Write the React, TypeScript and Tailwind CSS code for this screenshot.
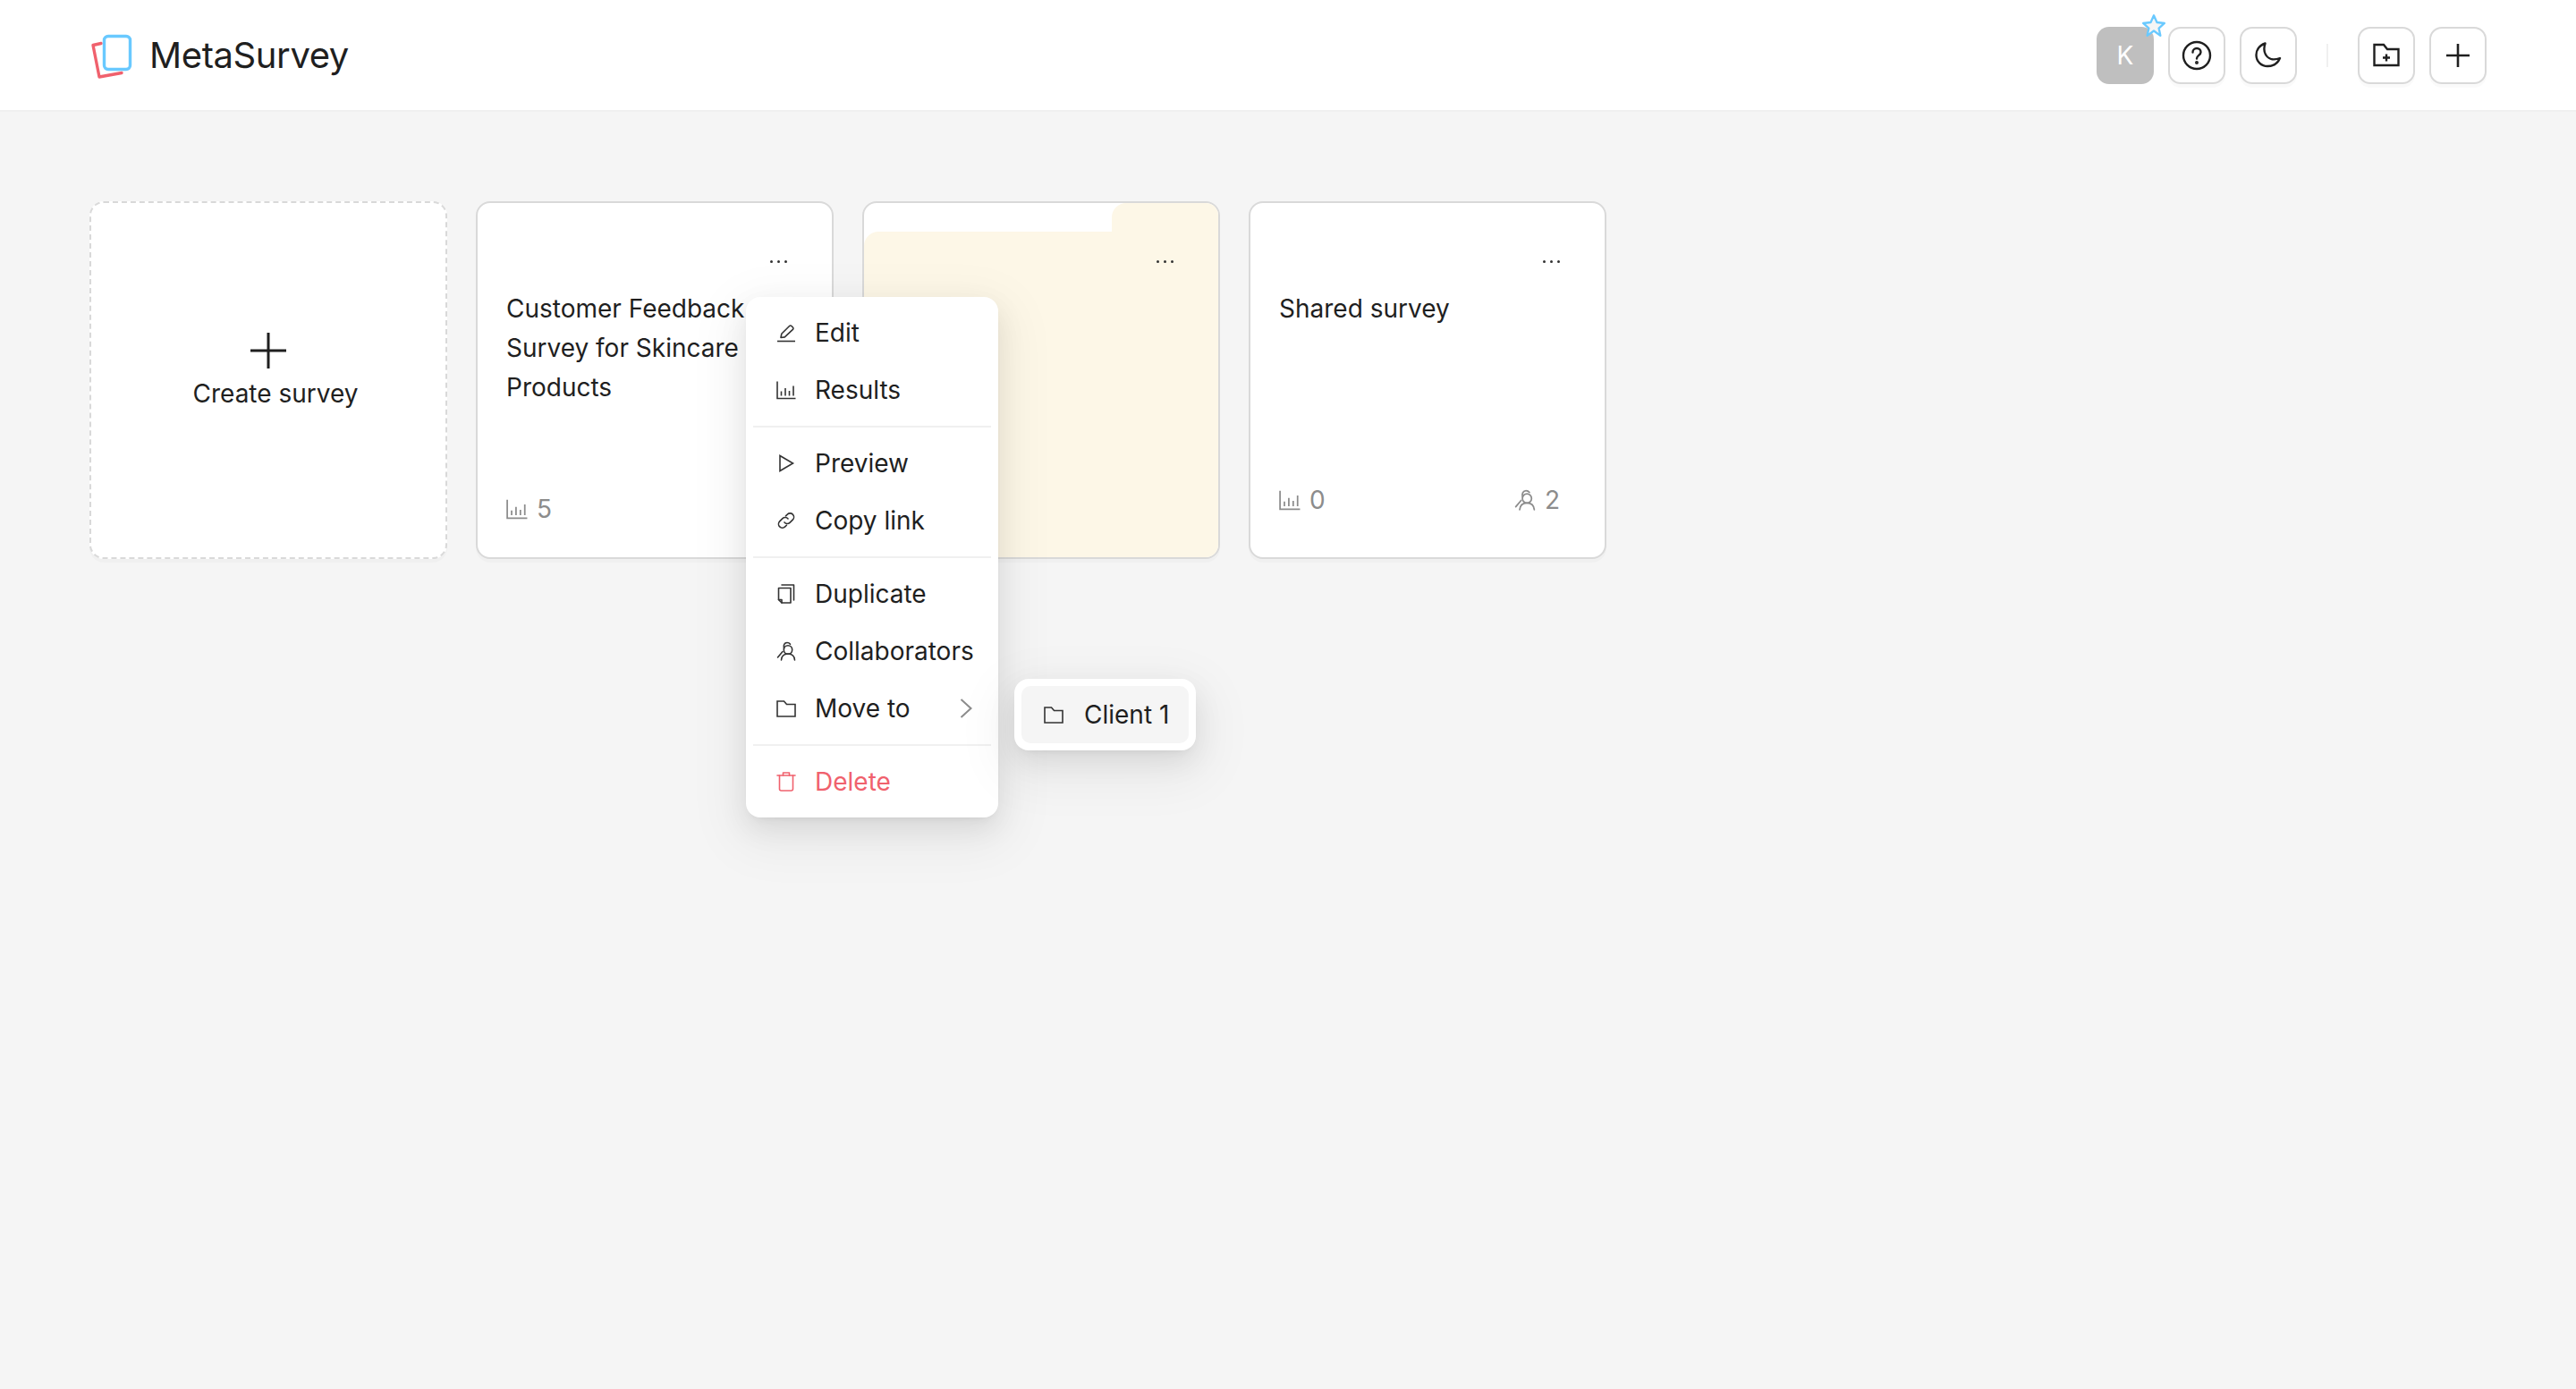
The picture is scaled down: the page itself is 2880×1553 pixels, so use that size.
import React from "react";

const S = ({ size = 22, sw = 1.6, className = "", children }: { size?: number; sw?: number; className?: string; children: React.ReactNode }) => (
  <svg width={size} height={size} viewBox="0 0 22 22" fill="none" stroke="currentColor" strokeWidth={sw} strokeLinecap="round" strokeLinejoin="round" className={className}>
    {children}
  </svg>
);

const EditIcon = () => (
  <S>
    <path d="M1 20.5h20" strokeLinecap="butt" />
    <path d="M5 16.5l.8-4.2L14.6 3.5a1.6 1.6 0 0 1 2.3 0l1.5 1.5a1.6 1.6 0 0 1 0 2.3L9.3 15.9 5 16.5z" />
  </S>
);
const ChartIcon = ({ size = 22 }: { size?: number }) => (
  <S size={size}>
    <path d="M1 1.5V20.5H21.5" strokeLinecap="butt" strokeLinejoin="miter" />
    <path d="M5.5 12.5v5M10 9v8.5M14.5 12v5.5M19 6.500v11" strokeLinecap="butt" />
  </S>
);
const PlayIcon = () => (
  <S>
    <path d="M4 2.500V19.500L18.500 11z" strokeLinejoin="miter" />
  </S>
);
const LinkIcon = () => (
  <S>
    <path d="M9 13a4 4 0 0 0 6 .4l3.300-3.300a4.200 4.200 0 0 0-6-6L10.500 5.800" />
    <path d="M13 9a4 4 0 0 0-6-.4l-3.300 3.300a4.200 4.200 0 0 0 6 6l1.700-1.700" />
  </S>
);
const DupIcon = () => (
  <S>
    <path d="M2.500 4.500H16V21H6l-3.500-3.500z" />
    <path d="M2.500 17.500H6V21" />
    <path d="M6 1H19.500V18" />
  </S>
);
const UsersIcon = ({ size = 22 }: { size?: number }) => (
  <S size={size}>
    <circle cx="13" cy="9.500" r="4.700" />
    <path d="M5.500 21c.4-4.500 3.300-7 7.500-7s7.100 2.500 7.500 7" />
    <path d="M8.500 8C7.500 4.500 9 1.500 12 1.500c1.500 0 2.700.7 3.500 1.800" />
    <path d="M7 11.500L1.500 18" />
  </S>
);
const FolderIcon = () => (
  <S>
    <path d="M1 3H8.500L11.500 6.500H21V20H1z" strokeLinejoin="miter" />
  </S>
);
const TrashIcon = () => (
  <S>
    <path d="M1 4H21" />
    <path d="M7.500 4V1H14.500V4" />
    <path d="M3.500 4V19a2 2 0 0 0 2 2H16.500a2 2 0 0 0 2-2V4" />
  </S>
);

const ItemRow = ({ icon, label, red, extra }: { icon: React.ReactNode; label: string; red?: boolean; extra?: React.ReactNode }) => (
  <div className={`flex h-[64px] items-center pl-[26px] pr-[21px] text-[28px] ${red ? "text-[#f0616d]" : "text-[#1f1f1f]"}`}>
    <span className={`mr-[21px] flex w-[22px] justify-center ${red ? "" : "text-[#333333]"}`}>{icon}</span>
    <span className="flex-1">{label}</span>
    {extra}
  </div>
);
const Divider = () => <div className="my-[8px] h-[2px] bg-[#f0f0f0]" />;

const HBtn = ({ children }: { children: React.ReactNode }) => (
  <button className="flex h-[64px] w-[64px] items-center justify-center rounded-[14px] border-2 border-[#d9d9d9] bg-white text-[#1f1f1f] shadow-[0_4px_0_rgba(0,0,0,0.02)]">
    {children}
  </button>
);

const Dots = () => (
  <div className="absolute right-[50px] top-[64px] flex gap-[5px]">
    <span className="h-[3px] w-[3px] rounded-full bg-[#333333]" />
    <span className="h-[3px] w-[3px] rounded-full bg-[#333333]" />
    <span className="h-[3px] w-[3px] rounded-full bg-[#333333]" />
  </div>
);

const Stat = ({ icon, n }: { icon: React.ReactNode; n: string }) => (
  <div className="flex items-center gap-[10px] text-[28px] leading-[32px] text-[#8c8c8c]">
    {icon}
    <span>{n}</span>
  </div>
);

const cardCls = "relative flex h-[400px] w-[400px] flex-col rounded-[16px] border-2 border-[#d9d9d9] bg-white shadow-[0_4px_0_rgba(0,0,0,0.02)]";

export default function App() {
  return (
    <div className="relative min-h-[1553px] bg-[#f5f5f5] font-['Inter','Liberation_Sans',sans-serif] text-[#1f1f1f]">
      <header className="flex h-[125px] items-center justify-between border-b-2 border-[#f0f0f0] bg-white px-[100px]">
        <div className="flex items-center gap-[15px]">
          <svg width="52" height="60" viewBox="100 30 52 60" fill="none" strokeWidth="3.4" strokeLinecap="round" strokeLinejoin="round">
            <path d="M113 46.500L104 48.500L111 84L136 79.500" stroke="#f0616d" />
            <rect x="116.500" y="38.500" width="29" height="37" rx="4.500" stroke="#69c9ff" />
          </svg>
          <span className="text-[40px] leading-[48px] tracking-[-0.4px] text-[#1f1f1f]">MetaSurvey</span>
        </div>
        <div className="flex items-center gap-[16px]">
          <div className="relative flex h-[64px] w-[64px] items-center justify-center rounded-[14px] bg-[#bfbfbf] text-[28px] text-white">
            K
            <svg className="absolute -right-[14px] -top-[15px]" width="28" height="28" viewBox="0 0 24 24" fill="#f5f5f5" stroke="#69c9ff" strokeWidth="2" strokeLinejoin="round">
              <path d="M12 2l3 6.600 7.200.8-5.400 4.800 1.500 7.100L12 16.700 5.700 21.300l1.500-7.100L1.800 9.400 9 8.600z" />
            </svg>
          </div>
          <HBtn>
            <svg width="34" height="34" viewBox="0 0 34 34" fill="none" stroke="currentColor" strokeWidth="2.400" strokeLinecap="round">
              <circle cx="17" cy="17" r="15" />
              <path d="M12.500 13.500c0-2.700 2-4.500 4.500-4.500s4.500 1.800 4.500 4.200c0 3.800-4.500 3.600-4.500 7.300" />
              <circle cx="17" cy="25" r="0.800" fill="currentColor" />
            </svg>
          </HBtn>
          <HBtn>
            <svg width="30" height="30" viewBox="0 0 30 30" fill="none" stroke="currentColor" strokeWidth="2.400" strokeLinecap="round" strokeLinejoin="round">
              <path d="M11.500 1.500C4 4 1.500 10 1.500 14.500 1.500 22 7.500 27 14 27c6 0 11.500-3 14-9-8 3-13.500.5-16-4-2-3.500-2-8-.5-12.500z" />
            </svg>
          </HBtn>
          <div className="mx-[17px] h-[26px] w-[2px] bg-[#f0f0f0]" />
          <HBtn>
            <svg width="30" height="28" viewBox="0 0 30 28" fill="none" stroke="currentColor" strokeWidth="2.400" strokeLinejoin="miter">
              <path d="M1.500 2H12L16 7H28.500V25H1.500z" />
              <path d="M15 12.500v8M11 16.500h8" />
            </svg>
          </HBtn>
          <HBtn>
            <svg width="28" height="28" viewBox="0 0 28 28" fill="none" stroke="currentColor" strokeWidth="2.600">
              <path d="M14 1v26M1 14h26" />
            </svg>
          </HBtn>
        </div>
      </header>

      <main className="flex gap-[32px] px-[100px] pt-[100px]">
        <div className="flex h-[400px] w-[400px] flex-col items-center justify-center rounded-[16px] border-2 border-dashed border-[#d9d9d9] bg-white pb-[16px] shadow-[0_4px_0_rgba(0,0,0,0.02)]">
          <svg width="40" height="40" viewBox="0 0 40 40" fill="none" stroke="#1f1f1f" strokeWidth="3">
            <path d="M20 0v40M0 20h40" />
          </svg>
          <span className="ml-[16px] mt-[6px] text-[28px] leading-[44px]">Create survey</span>
        </div>

        <div className={cardCls}>
          <Dots />
          <div className="px-[32px] pt-[96px] text-[28px] leading-[44px]">
            Customer Feedback Survey for Skincare Products
          </div>
          <div className="mt-auto px-[32px] pb-[38px]">
            <Stat icon={<ChartIcon size={24} />} n="5" />
          </div>
        </div>

        <div className={`${cardCls} overflow-hidden`}>
          <div className="flex h-[32px] shrink-0 justify-end">
            <div className="w-[119px] rounded-tl-[16px] bg-[#fdf7e7]" />
          </div>
          <div className="flex-1 rounded-tl-[16px] bg-[#fdf7e7]" />
          <Dots />
        </div>

        <div className={cardCls}>
          <Dots />
          <div className="px-[32px] pt-[96px] text-[28px] leading-[44px]">Shared survey</div>
          <div className="mt-auto flex items-center justify-between pb-[48px] pl-[32px] pr-[50px]">
            <Stat icon={<ChartIcon size={24} />} n="0" />
            <Stat icon={<UsersIcon size={24} />} n="2" />
          </div>
        </div>
      </main>

      <div className="absolute left-[834px] top-[332px] w-[282px] rounded-[16px] bg-white p-[8px] shadow-[0_12px_32px_rgba(0,0,0,0.08),0_6px_12px_-8px_rgba(0,0,0,0.12),0_18px_56px_16px_rgba(0,0,0,0.05)]">
        <ItemRow icon={<EditIcon />} label="Edit" />
        <ItemRow icon={<ChartIcon />} label="Results" />
        <Divider />
        <ItemRow icon={<PlayIcon />} label="Preview" />
        <ItemRow icon={<LinkIcon />} label="Copy link" />
        <Divider />
        <ItemRow icon={<DupIcon />} label="Duplicate" />
        <ItemRow icon={<UsersIcon />} label="Collaborators" />
        <ItemRow
          icon={<FolderIcon />}
          label="Move to"
          extra={
            <svg width="14" height="24" viewBox="0 0 14 24" fill="none" stroke="#8c8c8c" strokeWidth="2">
              <path d="M1.500 2L12.500 12L1.500 22" />
            </svg>
          }
        />
        <Divider />
        <ItemRow icon={<TrashIcon />} label="Delete" red />
      </div>

      <div className="absolute left-[1134px] top-[759px] w-[203px] rounded-[16px] bg-white p-[8px] shadow-[0_12px_32px_rgba(0,0,0,0.08),0_6px_12px_-8px_rgba(0,0,0,0.12),0_18px_56px_16px_rgba(0,0,0,0.05)]">
        <div className="flex h-[64px] items-center rounded-[10px] bg-[#f5f5f5] pl-[25px] text-[28px] text-[#1f1f1f]">
          <span className="mr-[23px] flex text-[#333333]"><FolderIcon /></span>
          Client 1
        </div>
      </div>
    </div>
  );
}
